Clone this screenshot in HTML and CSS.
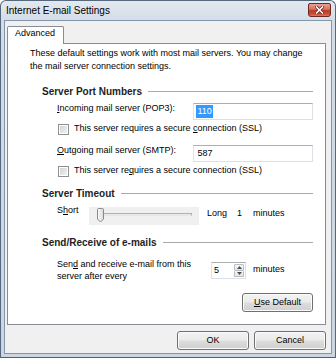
FILE: index.html
```html
<!DOCTYPE html>
<html>
<head>
<meta charset="utf-8">
<link rel="stylesheet" href="styles.css">
</head>
<body>
<div class="window">
  <div class="titlebar">
    <span class="title">Internet E-mail Settings</span>
    <span class="close-btn">
      <svg class="close-x" width="9" height="8" viewBox="0 0 9 8">
        <path d="M1.5 1 L7.5 7 M7.5 1 L1.5 7" stroke="#5a1e18" stroke-width="3" stroke-linecap="square"/>
        <path d="M1.5 1 L7.5 7 M7.5 1 L1.5 7" stroke="#ffffff" stroke-width="1.6" stroke-linecap="square"/>
      </svg>
    </span>
  </div>
  <div class="client">
    <div class="tabs"><div class="tab">Advanced</div></div>
    <div class="panel">
      <p class="intro">These default settings work with most mail servers. You may change<br>the mail server connection settings.</p>

      <div class="group-head head-ports"><span class="head-text">Server Port Numbers</span><span class="rule"></span></div>
      <div class="field-row">
        <span class="lbl"><u>I</u>ncoming mail server (POP3):</span>
        <span class="textbox"><span class="sel">110</span></span>
      </div>
      <div class="check-row"><span class="checkbox"></span><span class="check-text">This server requires a secure <u>c</u>onnection (SSL)</span></div>
      <div class="field-row row-out">
        <span class="lbl"><u>O</u>utgoing mail server (SMTP):</span>
        <span class="textbox"><span class="val">587</span></span>
      </div>
      <div class="check-row"><span class="checkbox"></span><span class="check-text">This server re<u>q</u>uires a secure connection (SSL)</span></div>

      <div class="group-head head-timeout"><span class="head-text">Server Timeout</span><span class="rule"></span></div>
      <div class="slider-row">
        <span class="short">S<u>h</u>ort</span>
        <span class="slider">
          <span class="track"></span>
          <svg class="thumb" width="9" height="15" viewBox="0 0 9 15">
            <defs>
              <linearGradient id="tg" x1="0" y1="0" x2="1" y2="0">
                <stop offset="0" stop-color="#fbfbfb"/>
                <stop offset="1" stop-color="#d9d9d9"/>
              </linearGradient>
            </defs>
            <path d="M1.5 1.5 Q1.5 0.5 2.5 0.5 H6.5 Q7.5 0.5 7.5 1.5 V11 L4.5 14 L1.5 11 Z" fill="url(#tg)" stroke="#8a8a8a"/>
          </svg>
        </span>
        <span class="long">Long</span>
        <span class="num">1</span>
        <span class="unit">minutes</span>
      </div>

      <div class="group-head head-send"><span class="head-text">Send/Receive of e-mails</span><span class="rule"></span></div>
      <div class="send-row">
        <span class="send-lbl">Sen<u>d</u> and receive e-mail from this<br>server after every</span>
        <span class="spinner">
          <span class="spin-val">5</span>
          <span class="spin-btns">
            <span class="spin-btn"><svg width="5" height="3" viewBox="0 0 5 3"><path d="M0 3 L2.5 0 L5 3 Z" fill="#4d4d4d"/></svg></span>
            <span class="spin-btn"><svg width="5" height="3" viewBox="0 0 5 3"><path d="M0 0 L2.5 3 L5 0 Z" fill="#4d4d4d"/></svg></span>
          </span>
        </span>
        <span class="send-unit">minutes</span>
      </div>
      <div class="default-row"><button class="btn btn-default"><u>U</u>se Default</button></div>
    </div>
    <div class="buttons">
      <button class="btn btn-dlg">OK</button>
      <button class="btn btn-dlg">Cancel</button>
    </div>
  </div>
</div>
</body>
</html>
```
FILE: styles.css
```css
html, body {
  margin: 0;
  padding: 0;
  background: #ffffff;
}
body {
  font-family: "Liberation Sans", Arial, sans-serif;
  font-size: 9px;
  color: #000;
}
u { text-decoration: underline; text-underline-offset: 1px; }

.window {
  width: 336px;
  height: 358px;
  box-sizing: border-box;
  border: 1px solid #56687d;
  border-bottom-color: #2f6f7c;
  border-radius: 6px 6px 0 0;
  background: linear-gradient(#e3e9f0, #d3dce7 20px, #cbd6e2);
  display: flex;
  flex-direction: column;
}

.titlebar {
  height: 19px;
  display: flex;
  justify-content: space-between;
  align-items: flex-start;
  padding: 0 4px 0 5px;
}
.title {
  font-size: 10px;
  line-height: 12px;
  margin-top: 4px;
  color: #000;
}
.close-btn {
  flex: none;
  margin-top: 2px;
  width: 23px;
  height: 14px;
  box-sizing: border-box;
  border: 1px solid #6a2a22;
  border-radius: 2px 2px 3px 3px;
  background-color: #c8432f;
  background-image: linear-gradient(#e8a093 0%, #d5705f 45%, #c23a28 52%, #c64833 80%, #da7a60 100%);
  display: flex;
  align-items: center;
  justify-content: center;
}
.close-x { display: block; }

.client {
  flex: 1;
  margin: 0 3px 3px;
  background: #f0f0f0;
  border: 1px solid #8496ab;
  display: flex;
  flex-direction: column;
  padding: 5px 5px 3px 2px;
}

.tabs {
  display: flex;
  height: 17px;
  position: relative;
  z-index: 1;
}
.tab {
  width: 57px;
  height: 18px;
  box-sizing: border-box;
  border: 1px solid #898c95;
  border-bottom: none;
  border-radius: 2px 2px 0 0;
  background: #ffffff;
  padding-left: 7px;
  line-height: 13px;
}

.panel {
  height: 282px;
  box-sizing: border-box;
  border: 1px solid #898c95;
  background: #ffffff;
  padding: 0 12px 0 22px;
  display: flex;
  flex-direction: column;
}

.intro {
  margin: 3px 0 0;
  line-height: 13px;
  white-space: nowrap;
}

.group-head {
  display: flex;
  align-items: center;
  height: 13px;
  margin-left: 12px;
}
.head-text {
  font-size: 10px;
  font-weight: bold;
  line-height: 13px;
  white-space: nowrap;
  color: #1e1e1e;
}
.rule {
  flex: 1;
  height: 1px;
  background: #a9a9a9;
  margin-left: 6px;
}
.head-ports { margin-top: 12px; }
.head-timeout { margin-top: 10px; }
.head-send { margin-top: 11px; }

.field-row {
  display: flex;
  align-items: flex-start;
  height: 17px;
  margin: 5px 0 0 27px;
}
.row-out { margin-top: 10px; }
.lbl {
  width: 137px;
  line-height: 13px;
  margin-top: -1px;
  white-space: nowrap;
}
.textbox {
  width: 120px;
  height: 17px;
  box-sizing: border-box;
  border: 1px solid #dbdfe6;
  border-top-color: #abadb3;
  border-left-color: #e2e3ea;
  background: #fff;
  display: flex;
  align-items: center;
  padding-left: 2px;
}
.sel {
  background: #3399ff;
  color: #fff;
  line-height: 13px;
  padding: 0 1px;
}
.val {
  line-height: 13px;
  padding-left: 1px;
}

.check-row {
  display: flex;
  align-items: flex-start;
  height: 13px;
  margin: 2px 0 0 28px;
}
.checkbox {
  width: 11px;
  height: 11px;
  box-sizing: border-box;
  margin-top: 2px;
  border: 1px solid #8e8f8f;
  background: linear-gradient(135deg, #cbcfd5, #f6f6f6);
  box-shadow: inset 0 0 0 1px #fff;
}
.check-text {
  margin-left: 5px;
  line-height: 13px;
  white-space: nowrap;
}

.slider-row {
  display: flex;
  align-items: flex-start;
  height: 18px;
  margin: 7px 0 0 27px;
}
.short {
  width: 32px;
  line-height: 13px;
  margin-top: -3px;
}
.slider {
  width: 110px;
  height: 18px;
  background: #f0f0f0;
  position: relative;
}
.track {
  position: absolute;
  left: 11px;
  right: 7px;
  top: 6px;
  height: 3px;
  box-sizing: border-box;
  border: 1px solid #b0b0b0;
  border-bottom-color: #e6e6e6;
  background: #e7eaea;
}
.thumb {
  position: absolute;
  left: 7px;
  top: 1px;
  display: block;
}
.long {
  margin-left: 8px;
  width: 30px;
  line-height: 13px;
}
.num {
  width: 16px;
  line-height: 13px;
}
.unit {
  line-height: 13px;
}

.send-row {
  display: flex;
  align-items: flex-start;
  margin: 9px 0 0 27px;
  height: 24px;
}
.send-lbl {
  width: 154px;
  line-height: 12px;
  white-space: nowrap;
}
.spinner {
  margin-top: 4px;
  width: 35px;
  height: 17px;
  box-sizing: border-box;
  border: 1px solid #dbdfe6;
  border-top-color: #abadb3;
  border-left-color: #e2e3ea;
  background: #fff;
  display: flex;
  align-items: stretch;
}
.spin-val {
  flex: 1;
  line-height: 15px;
  padding-left: 2px;
}
.spin-btns {
  width: 10px;
  display: flex;
  flex-direction: column;
  padding: 1px 1px 1px 0;
}
.spin-btn {
  flex: 1;
  display: flex;
  align-items: center;
  justify-content: center;
  border: 1px solid #b8bec6;
  border-radius: 1px;
  background: linear-gradient(#f7f7f7, #e4e4e4);
}
.spin-btn + .spin-btn { border-top: none; }
.spin-btn svg { display: block; }
.send-unit {
  margin-left: 7px;
  margin-top: 5px;
  line-height: 12px;
}

.default-row {
  display: flex;
  justify-content: flex-end;
  margin-top: 11px;
}

.btn {
  font-family: "Liberation Sans", Arial, sans-serif;
  font-size: 9px;
  color: #000;
  height: 19px;
  box-sizing: border-box;
  border: 1px solid #707070;
  border-radius: 3px;
  background: linear-gradient(#f2f2f2 0%, #ebebeb 48%, #dddddd 52%, #cfcfcf 100%);
  box-shadow: inset 0 0 0 1px #fbfbfb;
  padding: 0;
  margin: 0;
  line-height: 15px;
}
.btn-default { width: 71px; }

.buttons {
  display: flex;
  justify-content: flex-end;
  gap: 5px;
  margin-top: 6px;
}
.btn-dlg { width: 72px; }
```
